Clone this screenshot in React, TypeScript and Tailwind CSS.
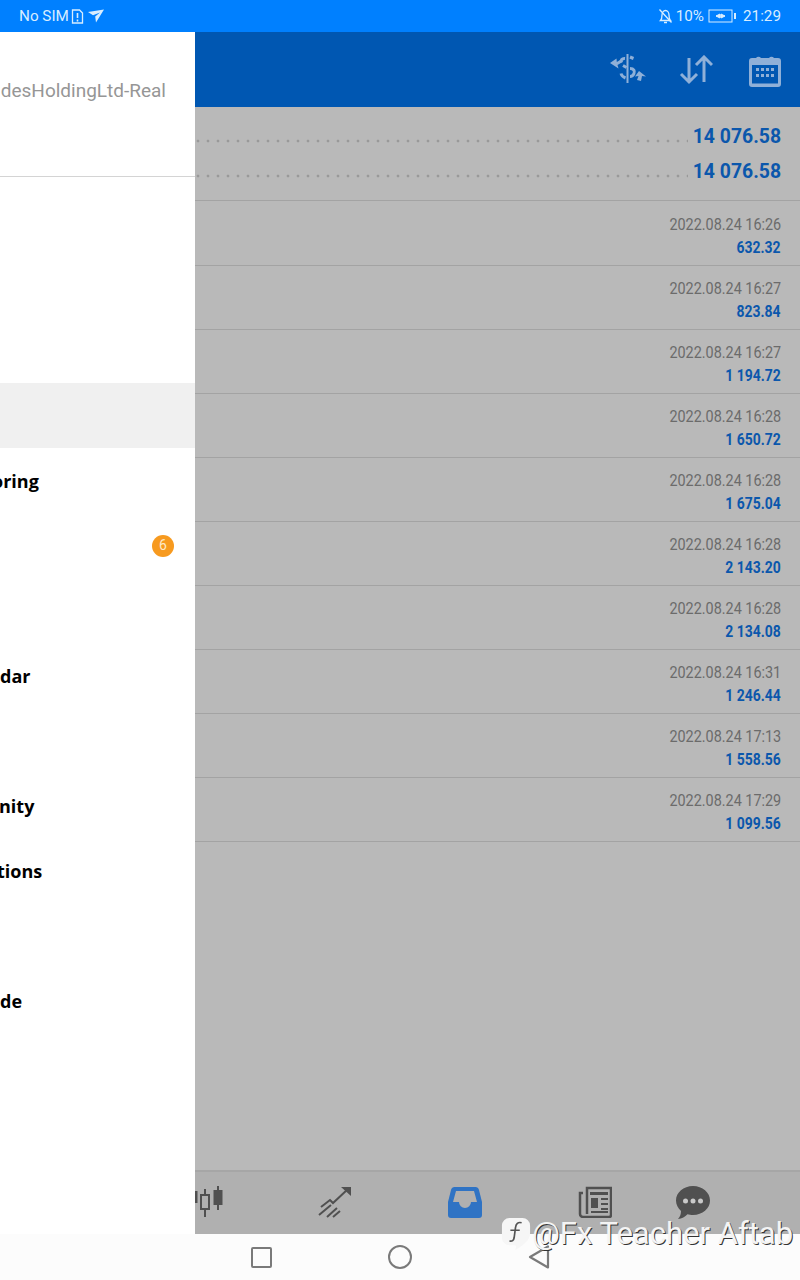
import { FC, ReactNode } from 'react';

const deals = [
  ['2022.08.24 16:26', '632.32'],
  ['2022.08.24 16:27', '823.84'],
  ['2022.08.24 16:27', '1 194.72'],
  ['2022.08.24 16:28', '1 650.72'],
  ['2022.08.24 16:28', '1 675.04'],
  ['2022.08.24 16:28', '2 143.20'],
  ['2022.08.24 16:28', '2 134.08'],
  ['2022.08.24 16:31', '1 246.44'],
  ['2022.08.24 17:13', '1 558.56'],
  ['2022.08.24 17:29', '1 099.56'],
];

// the drawer is mid-slide, so labels are cut off by the left edge of the screen
const menu: { label?: string; shift?: string; active?: boolean; badge?: string }[] = [
  {},
  {},
  {},
  { active: true },
  { label: 'oring', shift: '-ml-[8px]' },
  { badge: '6' },
  {},
  { label: 'dar', shift: '-ml-[0px]' },
  {},
  { label: 'nity', shift: '-ml-[1px]' },
  { label: 'tions', shift: '-ml-[3px]' },
  {},
  { label: 'de', shift: '-ml-[0px]' },
];

const StatusBar = () => (
  <div className="flex h-8 items-center justify-between bg-[#0080ff] px-[19px] text-[15.25px] text-[#d8edff]">
    <div className="flex items-center gap-[2px]">
      <span>No SIM</span>
      <svg width="13" height="15" viewBox="0 0 13 15" fill="none" stroke="currentColor" strokeWidth="1.3">
        <path d="M1.500 1h7l3 3v10h-10z" />
        <path d="M6.500 4v5M6.500 10.500v2" strokeWidth="1.600" />
      </svg>
      <svg width="16" height="14" viewBox="0 0 16 14" fill="currentColor" className="ml-[2px]">
        <path d="M0 3l16-2.500L8 13.500 7.200 7.500 12 3.500 5 6.200z" />
      </svg>
    </div>
    <div className="flex items-center gap-[3px]">
      <svg width="15" height="16" viewBox="0 0 15 16" fill="none" stroke="currentColor" strokeWidth="1.300">
        <path d="M2.500 12.500c1.500-1.500 1.500-3 1.500-5.500 0-2.500 1.500-4.500 3.500-4.500s3.500 2 3.500 4.500c0 2.500 0 4 1.500 5.500z" />
        <path d="M6 14.500h3M1.500 1.500l12 13" />
      </svg>
      <span>10%</span>
      <svg width="29" height="14" viewBox="0 0 29 14" fill="none" stroke="currentColor" className="ml-[1px]">
        <rect x="1" y="1" width="23" height="12" strokeWidth="1" />
        <path d="M8 7h9M12 5v4L8 7zM13 5l4 2-4 2z" strokeWidth="1" fill="currentColor" />
        <rect x="26.500" y="4.500" width="1" height="5" fill="currentColor" strokeWidth="1" />
      </svg>
      <span className="ml-[3px]">21:29</span>
    </div>
  </div>
);

const Drawer = () => (
  <div className="flex h-full w-[195px] shrink-0 flex-col bg-white">
    <div className="flex h-[145px] items-center justify-end overflow-hidden border-b border-[#d4d4d4] pb-[25px] pr-[29px] text-[19px] text-[#969696]">
      <span className="whitespace-nowrap">desHoldingLtd-Real</span>
    </div>
    <div className="flex flex-col pt-[11px]">
      {menu.map((item, i) => (
        <div
          key={i}
          className={`flex h-[65px] items-center justify-between pr-[21px] font-['Open_Sans',sans-serif] text-[18px] font-bold text-black ${item.active ? 'bg-[#f0f0f0]' : ''}`}>
          <span className={`mt-[2px] ${item.shift ?? ''}`}>{item.label}</span>
          {item.badge && (
            <span className="flex h-[22px] w-[22px] items-center justify-center rounded-full bg-[#f79a1f] font-['Roboto',sans-serif] text-[14px] font-normal text-[#fde9c8]">
              {item.badge}
            </span>
          )}
        </div>
      ))}
    </div>
  </div>
);

const TopIcons = () => (
  <div className="flex h-[75px] items-center justify-end bg-[#0057b2] pr-[19px] text-[#8fb0d8]">
    <svg width="36" height="30" viewBox="0 0 36 30" fill="none" stroke="currentColor" className="mt-[-2px]">
      <path d="M0 9l6.500-4.500.3 3.500L11 5.500 12.500 8 7.500 11l1 3.500z" fill="currentColor" stroke="none" />
      <path d="M17.500 0v29" strokeWidth="2" />
      <path d="M15 4.500c-3-.3-4.500 1.500-3.500 4M13 11.500l3.500 2" strokeWidth="3" />
      <path d="M11 19.500c.5 2 2 3.500 4.500 4.500" strokeWidth="3" />
      <path d="M20 14.500c4 0 5 2.500 4 5s-2.500 3-4 3" strokeWidth="3" />
      <path d="M36 22.500l-7-5.500-4 5.500 3.500-.5-1.500 4 4 1 1-5z" fill="currentColor" stroke="none" />
      <path d="M20 3l3.500 1.500" strokeWidth="3" />
    </svg>
    <svg width="34" height="30" viewBox="0 0 34 30" fill="none" stroke="currentColor" strokeWidth="3" className="ml-[33px]">
      <path d="M10 3v24M2 19l8 8 8-8" />
      <path d="M25 27V2M17 10l8-8 8 8" />
    </svg>
    <svg width="32" height="34" viewBox="0 0 32 34" fill="currentColor" className="ml-[36px]">
      <path
        fillRule="evenodd"
        d="M3 5h4a3 3 0 0 1 5 0h8a3 3 0 0 1 5 0h4a3 3 0 0 1 3 3v23a3 3 0 0 1-3 3H3a3 3 0 0 1-3-3V8a3 3 0 0 1 3-3zm0 7v18.500h26V12z"
      />
      <path d="M7 15h3v3H7zM12 15h3v3h-3zM17 15h3v3h-3zM22 15h3v3h-3zM7 21h3v3H7zM12 21h3v3h-3zM17 21h3v3h-3zM22 21h3v3h-3z" />
    </svg>
  </div>
);

const Summary: FC<{ value: string }> = ({ value }) => (
  <div className="flex h-[35px] items-center pr-[19px]">
    <div className="mr-[2px] mt-[10px] h-[4px] flex-1 bg-[radial-gradient(circle,#999999_1.2px,transparent_1.7px)] bg-[length:10px_4px] bg-[position:-2px_0]" />
    <span className="origin-right scale-x-[0.97] whitespace-nowrap text-[20px] font-bold text-[#0b57ac]">{value}</span>
  </div>
);

const TabIcon: FC<{ children: ReactNode; w: number; h: number; view: string }> = ({ children, w, h, view }) => (
  <svg width={w} height={h} viewBox={view}>
    {children}
  </svg>
);

const TabBar = () => (
  <div className="flex h-[64px] items-center border-t-2 border-[#a6a6a6] bg-[#b0b0b0] pb-[2px] text-[#505050]">
    <div className="flex w-[29px] justify-start">
      <TabIcon w={29} h={32} view="0 0 29 32">
        <path d="M0 5h2.500v12H0z" fill="#505050" />
        <path d="M10 3v28" stroke="#505050" strokeWidth="2" />
        <rect x="6" y="9" width="8" height="14" fill="#b0b0b0" stroke="#505050" strokeWidth="2" />
        <path d="M23 0v24" stroke="#505050" strokeWidth="2" />
        <rect x="18.500" y="4" width="9" height="15" fill="#505050" />
      </TabIcon>
    </div>
    <div className="ml-[94px]">
      <TabIcon w={34} h={32} view="0 0 34 32">
        <path d="M3 21l9-7 3 3L30 3" fill="none" stroke="#505050" strokeWidth="2" />
        <path d="M23 1h10v9z" fill="#505050" />
        <path d="M1 29l12-10M9 31l10-9M15 31l7-6" stroke="#505050" strokeWidth="2" />
      </TabIcon>
    </div>
    <div className="ml-[96px]">
      <TabIcon w={34} h={31} view="0 0 34 31">
        <path
          fillRule="evenodd"
          d="M7 0h20a4 4 0 0 1 4 3l3 12v13a3 3 0 0 1-3 3H3a3 3 0 0 1-3-3V15L3 3a4 4 0 0 1 4-3zm1 4L5 15h6a6 6 0 0 0 12 0h6L26 4z"
          fill="#2f73c4"
        />
      </TabIcon>
    </div>
    <div className="ml-[96px]">
      <TabIcon w={34} h={32} view="0 0 34 32">
        <path d="M5 7H2v21a3 3 0 0 0 3 3h26a2 2 0 0 0 2-2V2H9v26" fill="none" stroke="#505050" strokeWidth="2.500" />
        <path d="M12 6h18v3H12zM13 12h7v10h-7zM23 12h7v2h-7zM23 17h7v2h-7zM23 22h7v2h-7zM13 25h17v2H13z" fill="#505050" />
      </TabIcon>
    </div>
    <div className="ml-[64px]">
      <TabIcon w={34} h={33} view="0 0 34 33">
        <path d="M17 0c9.500 0 17 6.500 17 14.500S26.500 29 17 29c-2 0-4-.3-5.500-.8C9 31 6 32.500 2 33c2-2 3-5 3-8C2 22 0 18.500 0 14.500 0 6.500 7.500 0 17 0z" fill="#505050" />
        <circle cx="9.500" cy="15" r="2.500" fill="#c9c9c9" />
        <circle cx="17" cy="15" r="2.500" fill="#c9c9c9" />
        <circle cx="24.500" cy="15" r="2.500" fill="#c9c9c9" />
      </TabIcon>
    </div>
  </div>
);

const NavBar = () => (
  <div className="flex h-[46px] items-center bg-[#fcfcfc] pl-[251px]">
    <div className="h-[21px] w-[21px] rounded-[2px] border-2 border-[#7a7a7a]" />
    <div className="ml-[116px] h-[24px] w-[24px] rounded-full border-2 border-[#7a7a7a]" />
    <svg width="22" height="24" viewBox="0 0 22 24" fill="none" stroke="#7a7a7a" strokeWidth="2.200" className="ml-[116px]">
      <path d="M20 1.500v21L2 12z" strokeLinejoin="round" />
    </svg>
  </div>
);

const App = () => (
  <div className="relative flex h-[1280px] w-[800px] flex-col overflow-hidden bg-[#b9b9b9] font-['Roboto',sans-serif]">
    <StatusBar />
    <div className="flex h-[1202px]">
      <Drawer />
      <div className="flex min-w-0 flex-1 flex-col">
        <TopIcons />
        <div className="flex flex-1 flex-col">
          <div className="h-[94px] border-b border-[#a3a3a3] pt-[11px]">
            <Summary value="14 076.58" />
            <Summary value="14 076.58" />
          </div>
          {deals.map(([time, amount], i) => (
            <div
              key={i}
              className={`flex flex-col items-end border-b border-[#a3a3a3] pr-[19px] ${i === 0 ? 'h-[65px] pt-[14px]' : 'h-[64px] pt-[13px]'}`}>
              <span className="origin-right scale-x-[0.9] whitespace-nowrap text-[16px] leading-[20px] text-[#6b6b6b]">{time}</span>
              <span className="mt-[3px] origin-right scale-x-[0.87] whitespace-nowrap text-[16px] font-bold leading-[20px] text-[#0b57ac]">{amount}</span>
            </div>
          ))}
          <div className="flex-1" />
          <TabBar />
        </div>
      </div>
    </div>
    <NavBar />
    <div className="absolute left-[501px] top-[1216px] flex items-center text-[31px] leading-[34px] text-[#f4f4f4] [text-shadow:1px_1px_0_#333]">
      <svg width="30" height="36" viewBox="0 0 32 36" className="mr-[1px]">
        <path d="M9 1h14a8 8 0 0 1 8 8v8c0 8-8 14-16 18 2-3 1-5-1-5H9a8 8 0 0 1-8-8V9a8 8 0 0 1 8-8z" fill="#f6f6f6" />
        <path d="M22 6c-4-1-6 1-6.500 5L14 22c-.5 3-2 4-5 3.500M10 14h10" fill="none" stroke="#555" strokeWidth="1.800" />
      </svg>
      <span className="whitespace-nowrap">@Fx Teacher Aftab</span>
    </div>
  </div>
);

export default App;
